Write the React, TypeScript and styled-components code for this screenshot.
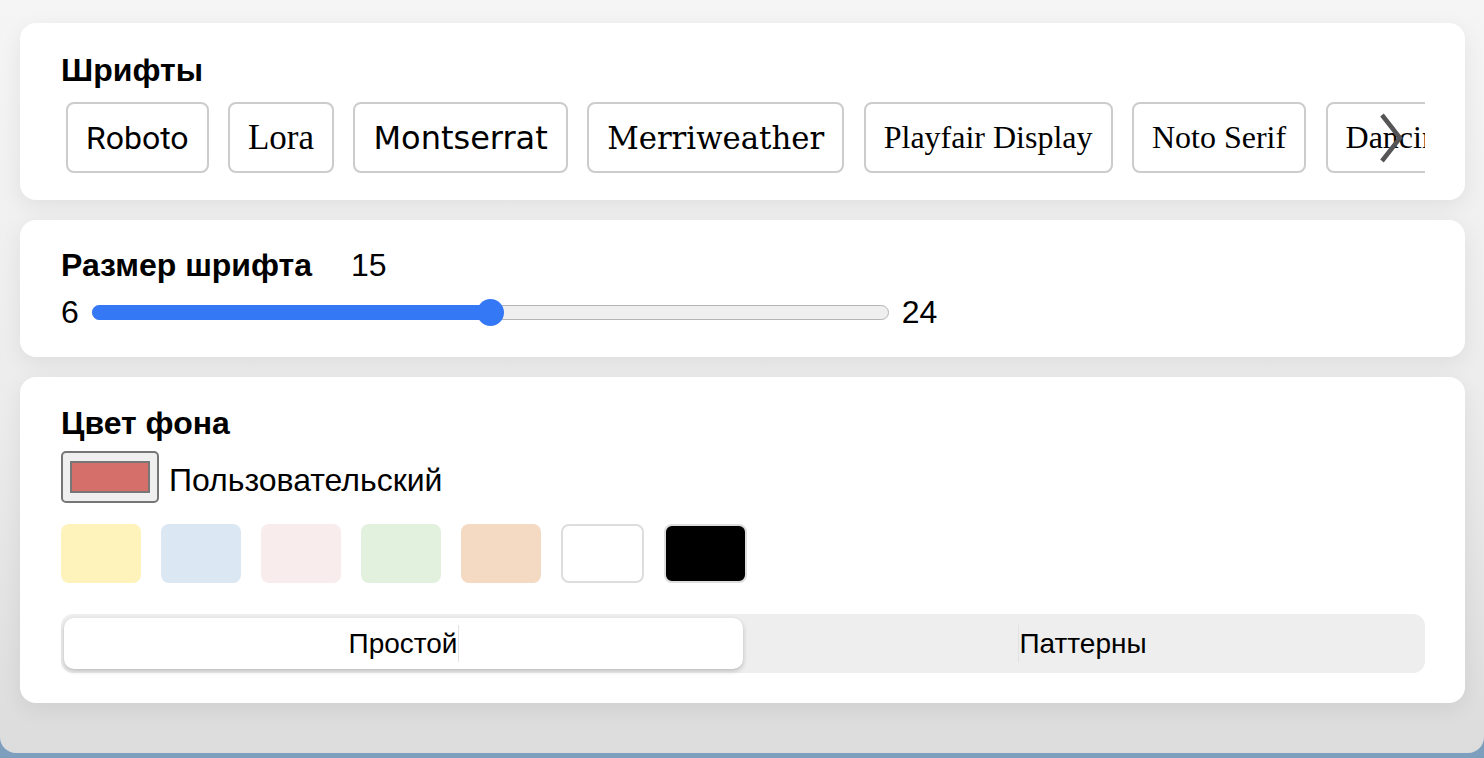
import React, { useState } from "react";
import styled, { createGlobalStyle } from "styled-components";

const GlobalStyle = createGlobalStyle`
  html, body {
    margin: 0;
    padding: 0;
    background: #7d9fbd;
  }
  body {
    font-family: "Liberation Sans", Arial, sans-serif;
    color: #000;
  }
  * {
    box-sizing: border-box;
  }
`;

const fonts = [
  { name: "Roboto", family: "Roboto, sans-serif", size: 32 },
  { name: "Lora", family: '"Liberation Serif", serif', size: 35 },
  { name: "Montserrat", family: '"DejaVu Sans", sans-serif', size: 32 },
  { name: "Merriweather", family: '"DejaVu Serif", serif', size: 30.8 },
  { name: "Playfair Display", family: '"Liberation Serif", serif', size: 32 },
  { name: "Noto Serif", family: '"Liberation Serif", serif', size: 32 },
  { name: "Dancing Script", family: '"Liberation Serif", serif', size: 32 },
];

const swatches = [
  { color: "#fdf3bb" },
  { color: "#dbe8f4" },
  { color: "#f9ecec" },
  { color: "#e2f1dd" },
  { color: "#f4d9c3" },
  { color: "#ffffff", bordered: true },
  { color: "#000000", bordered: true },
];

const MIN = 6;
const MAX = 24;

const App = () => {
  const [size] = useState(15);
  const [mode, setMode] = useState<"plain" | "pattern">("plain");
  const percent = ((size - MIN) / (MAX - MIN)) * 100;

  return (
    <>
      <GlobalStyle />
      <Panel>
        <Card>
          <Title>Шрифты</Title>
          <FontStrip>
            <FontScroller>
              {fonts.map((f) => (
                <FontButton key={f.name} $family={f.family} $size={f.size}>
                  {f.name}
                </FontButton>
              ))}
            </FontScroller>
            <ScrollArrow aria-label="next">
              <svg width="24" height="52" viewBox="0 0 24 52">
                <path
                  d="M3 3 L21 26 L3 49"
                  fill="none"
                  stroke="#555"
                  strokeWidth="4.5"
                />
              </svg>
            </ScrollArrow>
          </FontStrip>
        </Card>

        <Card $pad="27px 40px 26px 41px">
          <SizeHeader>
            <Title as="span">Размер шрифта</Title>
            <Value>{size}</Value>
          </SizeHeader>
          <SliderRow>
            <Value>{MIN}</Value>
            <Track>
              <Fill style={{ width: `${percent}%` }} />
              <Thumb style={{ left: `${percent}%` }} />
            </Track>
            <Value>{MAX}</Value>
          </SliderRow>
        </Card>

        <Card $pad="28px 40px 30px 41px">
          <Title>Цвет фона</Title>
          <CustomRow>
            <ColorWell>
              <ColorChip />
            </ColorWell>
            <Label>Пользовательский</Label>
          </CustomRow>
          <SwatchRow>
            {swatches.map((s) => (
              <Swatch key={s.color} $color={s.color} $bordered={s.bordered} />
            ))}
          </SwatchRow>
          <Segmented>
            <Segment $active={mode === "plain"} onClick={() => setMode("plain")}>
              Простой
              <Caret />
            </Segment>
            <Segment
              $active={mode === "pattern"}
              onClick={() => setMode("pattern")}
            >
              <Caret />
              Паттерны
            </Segment>
          </Segmented>
        </Card>
      </Panel>
    </>
  );
};

export default App;

const Panel = styled.div`
  display: flex;
  flex-direction: column;
  gap: 20px;
  height: 753px;
  padding: 23px 19px 0 20px;
  border-radius: 0 0 16px 16px;
  background: linear-gradient(180deg, #f5f5f5 0%, #ececec 55%, #dcdcdc 100%);
  overflow: hidden;
`;

const Card = styled.section<{ $pad?: string }>`
  background: #fff;
  border-radius: 16px;
  padding: ${({ $pad }) => $pad ?? "29px 40px 22px 41px"};
  box-shadow: 0 6px 22px rgba(0, 0, 0, 0.07);
`;

const Title = styled.h2`
  margin: 0;
  font-size: 32px;
  font-weight: 700;
  line-height: 37px;
`;

const FontStrip = styled.div`
  position: relative;
  margin-top: 8px;
`;

const FontScroller = styled.div`
  display: flex;
  gap: 19.4px;
  padding: 5px;
  overflow: hidden;
`;

const FontButton = styled.button<{ $family: string; $size: number }>`
  flex: none;
  height: 71px;
  padding: 0 18px;
  border: 2px solid #cccccc;
  border-radius: 8px;
  background: #fff;
  color: #000;
  font-family: ${({ $family }) => $family};
  font-size: ${({ $size }) => $size}px;
  white-space: nowrap;
  cursor: pointer;
`;

const ScrollArrow = styled.span`
  position: absolute;
  right: 22px;
  top: 15px;
  display: flex;
`;

const SizeHeader = styled.div`
  display: flex;
  align-items: baseline;
  gap: 39px;
`;

const Value = styled.span`
  font-size: 32px;
  line-height: 37px;
`;

const SliderRow = styled.div`
  display: flex;
  align-items: center;
  gap: 13px;
  margin-top: 10px;
`;

const Track = styled.div`
  position: relative;
  width: 797px;
  height: 15px;
  border: 1px solid #b5b5b5;
  border-radius: 8px;
  background: #efefef;
`;

const Fill = styled.div`
  position: absolute;
  left: -1px;
  top: -1px;
  bottom: -1px;
  border-radius: 8px 0 0 8px;
  background: #3478f6;
`;

const Thumb = styled.div`
  position: absolute;
  top: 50%;
  width: 27px;
  height: 27px;
  margin: -13.5px 0 0 -13.5px;
  border-radius: 50%;
  background: #3478f6;
`;

const CustomRow = styled.div`
  display: flex;
  align-items: center;
  gap: 10px;
  margin-top: 9px;
`;

const ColorWell = styled.div`
  display: flex;
  align-items: center;
  justify-content: center;
  width: 98px;
  height: 52px;
  border: 2px solid #767676;
  border-radius: 5px;
  background: #efefef;
`;

const ColorChip = styled.div`
  width: 80px;
  height: 32px;
  border: 2px solid #777;
  background: #d56f6a;
`;

const Label = styled.span`
  padding-top: 6px;
  font-size: 32px;
`;

const SwatchRow = styled.div`
  display: flex;
  gap: 20px;
  margin-top: 21px;
`;

const Swatch = styled.div<{ $color: string; $bordered?: boolean }>`
  width: ${({ $bordered }) => ($bordered ? 83 : 80)}px;
  height: 59px;
  border-radius: 8px;
  background: ${({ $color }) => $color};
  border: ${({ $bordered }) => ($bordered ? "2px solid #dddddd" : "none")};
`;

const Segmented = styled.div`
  display: grid;
  grid-template-columns: 1fr 1fr;
  margin-top: 31px;
  padding: 4px 3px;
  height: 59px;
  border-radius: 12px;
  background: #eeeeee;
`;

const Segment = styled.button<{ $active: boolean }>`
  display: flex;
  align-items: center;
  justify-content: center;
  border: none;
  border-radius: 10px;
  background: ${({ $active }) => ($active ? "#fff" : "transparent")};
  box-shadow: ${({ $active }) =>
    $active ? "0 2px 5px rgba(0, 0, 0, 0.22)" : "none"};
  font-family: "Liberation Sans", Arial, sans-serif;
  font-size: 28px;
  color: #000;
  cursor: pointer;
`;

const Caret = styled.span`
  display: inline-block;
  width: 1px;
  height: 37px;
  background: #e2e2e2;
`;
